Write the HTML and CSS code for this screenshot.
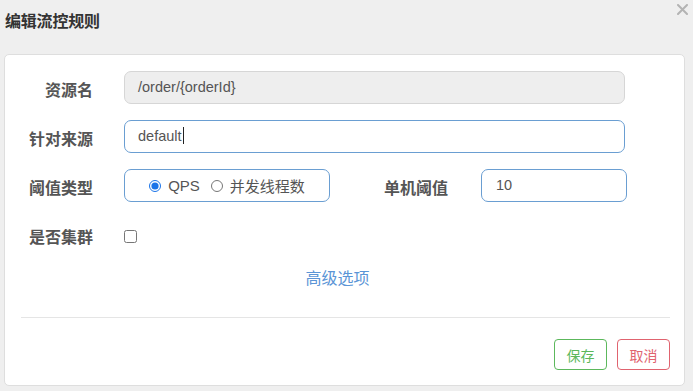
FILE: index.html
```html
<!DOCTYPE html>
<html lang="zh">
<head>
<meta charset="utf-8">
<title>编辑流控规则</title>
<link rel="stylesheet" href="styles.css">
</head>
<body>
<div class="dialog">
  <div class="dialog-header">
    <h4 class="dialog-title">编辑流控规则</h4>
    <svg class="close" width="11" height="11" viewBox="0 0 11 11" aria-label="关闭">
      <path d="M1 1L10 10M10 1L1 10" stroke="#b3b3b3" stroke-width="2" stroke-linecap="round"/>
    </svg>
  </div>
  <div class="panel">
    <form class="form">
      <div class="row">
        <label class="label">资源名</label>
        <div class="input disabled">/order/{orderId}</div>
      </div>
      <div class="row">
        <label class="label">针对来源</label>
        <div class="input focus">default<span class="caret"></span></div>
      </div>
      <div class="row">
        <label class="label">阈值类型</label>
        <div class="radio-group">
          <label class="radio"><input type="radio" name="grade" checked>QPS</label>
          <label class="radio"><input type="radio" name="grade">并发线程数</label>
        </div>
        <label class="label label-inline">单机阈值</label>
        <div class="input short">10</div>
      </div>
      <div class="row row-check">
        <label class="label">是否集群</label>
        <input class="check" type="checkbox">
      </div>
      <div class="advanced"><a class="link">高级选项</a></div>
      <hr class="divider">
      <div class="actions">
        <button type="button" class="btn btn-save">保存</button>
        <button type="button" class="btn btn-cancel">取消</button>
      </div>
    </form>
  </div>
</div>
</body>
</html>
```
FILE: styles.css
```css
html, body {
  margin: 0;
  padding: 0;
  background: #efefef;
  font-family: "Liberation Sans", "Noto Sans CJK SC", sans-serif;
  color: #555;
}

.dialog {
  width: 693px;
  height: 391px;
  box-sizing: border-box;
  padding: 0 8px 5px 4px;
}

.dialog-header {
  position: relative;
  height: 54px;
}

.dialog-title {
  margin: 0;
  padding: 9px 0 0 1px;
  font-size: 16px;
  line-height: 22px;
  font-weight: bold;
  color: #333;
  font-family: "Noto Sans CJK SC", sans-serif;
  letter-spacing: -0.2px;
}

.close {
  position: absolute;
  right: -3px;
  top: 4px;
}

.panel {
  height: 332px;
  box-sizing: border-box;
  background: #fff;
  border: 1px solid #dedede;
  border-radius: 5px;
  padding: 16px 14px 0 0;
}

.row {
  display: flex;
  align-items: center;
  height: 33px;
  margin-bottom: 16px;
}

.label {
  width: 88px;
  flex: none;
  text-align: right;
  font-size: 16px;
  font-weight: bold;
  color: #555;
  font-family: "Noto Sans CJK SC", sans-serif;
  margin-right: 31px;
  line-height: 22px;
  position: relative;
  top: 1px;
}

.input {
  flex: 1;
  height: 33px;
  box-sizing: border-box;
  border: 1px solid #ccc;
  border-radius: 7px;
  padding: 0 13px;
  font-size: 14.5px;
  line-height: 31px;
  color: #555;
  margin-right: 45px;
}

.input.disabled {
  background: #eeeeee;
  border-color: #d6d6d6;
}

.input.focus {
  border-color: #6a9ed2;
}

.caret {
  display: inline-block;
  width: 1px;
  height: 17px;
  background: #222;
  vertical-align: -3px;
  margin-left: 1px;
}

.radio-group {
  width: 206px;
  height: 33px;
  box-sizing: border-box;
  border: 1px solid #6a9ed2;
  border-radius: 7px;
  display: flex;
  align-items: center;
  justify-content: center;
  gap: 11px;
  font-size: 15px;
  font-family: "Liberation Sans", "Noto Sans CJK SC", sans-serif;
  color: #555;
  flex: none;
  padding-left: 0;
}

.radio {
  display: flex;
  align-items: center;
  white-space: nowrap;
}

.radio input {
  margin: 0 7px 0 0;
  width: 12px;
  height: 12px;
  accent-color: #1a73e8;
}

.label-inline {
  width: auto;
  margin-left: 54px;
  margin-right: 33px;
}

.input.short {
  flex: none;
  width: 146px;
  padding-left: 14px;
  border-color: #6a9ed2;
}

.row-check {
  margin-top: 2px;
  height: 33px;
}

.check {
  margin: 0;
  width: 13px;
  height: 13px;
  position: relative;
  top: 2px;
}

.advanced {
  text-align: center;
  margin-top: -1px;
  line-height: 22px;
}

.link {
  font-size: 16px;
  color: #5b95d6;
  font-family: "Noto Sans CJK SC", sans-serif;
  cursor: pointer;
}

.divider {
  margin: 27px 0 0 16px;
  border: 0;
  border-top: 1px solid #e5e5e5;
}

.actions {
  display: flex;
  justify-content: flex-end;
  gap: 10px;
  margin-top: 21px;
}

.btn {
  height: 31px;
  width: 53px;
  box-sizing: border-box;
  background: #fff;
  border-radius: 4px;
  font-size: 14px;
  font-family: "Noto Sans CJK SC", sans-serif;
  padding: 0;
  cursor: pointer;
}

.btn-save {
  border: 1px solid #5cb85c;
  color: #5cb85c;
}

.btn-cancel {
  border: 1px solid #e0636f;
  color: #e0636f;
}
```
